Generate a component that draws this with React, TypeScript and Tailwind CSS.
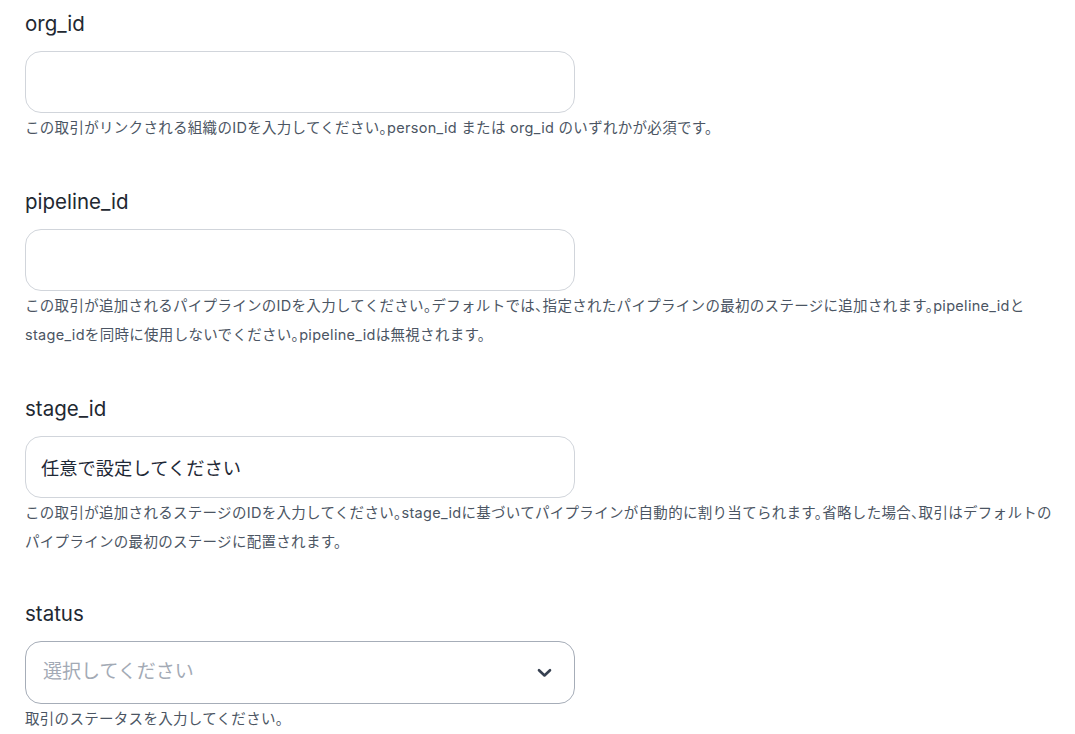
const fields = [
  {
    name: "org_id",
    value: "",
    help: ["この取引がリンクされる組織のIDを入力してください。person_id または org_id のいずれかが必須です。"],
  },
  {
    name: "pipeline_id",
    value: "",
    help: [
      "この取引が追加されるパイプラインのIDを入力してください。デフォルトでは、指定されたパイプラインの最初のステージに追加されます。pipeline_idと",
      "stage_idを同時に使用しないでください。pipeline_idは無視されます。",
    ],
  },
  {
    name: "stage_id",
    value: "任意で設定してください",
    help: [
      "この取引が追加されるステージのIDを入力してください。stage_idに基づいてパイプラインが自動的に割り当てられます。省略した場合、取引はデフォルトの",
      "パイプラインの最初のステージに配置されます。",
    ],
  },
];

const HelpText = ({ lines }: { lines: string[] }) => (
  <p className="text-[14.5px] leading-[29px] tracking-[0.3px] text-[#4b5563] whitespace-nowrap [font-feature-settings:'halt']">
    {lines.map((l, i) => (
      <span key={i} className="block">
        {l}
      </span>
    ))}
  </p>
);

export default function App() {
  return (
    <div
      className="min-h-screen bg-white pl-[25px] pr-[10px] pt-[10px] flex flex-col gap-[46px]"
      style={{ fontFamily: 'Inter, "Noto Sans CJK JP", sans-serif' }}
    >
      {fields.map((f) => (
        <div key={f.name} className="flex flex-col">
          <label className="text-[20.5px] leading-[28px] text-[#222831] mb-[13px]">{f.name}</label>
          <input
            readOnly
            value={f.value}
            className="w-[550px] h-[62px] rounded-2xl border border-[#d1d5db] px-[15px] text-[18.3px] text-[#1f2937] outline-none"
          />
          <HelpText lines={f.help} />
        </div>
      ))}

      <div className="flex flex-col -mt-[2px]">
        <label className="text-[20.5px] leading-[28px] text-[#222831] mb-[13px]">status</label>
        <button className="w-[550px] h-[63px] rounded-2xl border border-[#a6adb8] pl-[17px] pr-[22px] flex items-center justify-between text-left">
          <span className="text-[19px] text-[#a3aab5]">選択してください</span>
          <svg width="15" height="10" viewBox="0 0 15 10" fill="none">
            <path d="M2 2.2l5.5 5.3L13 2.2" stroke="#374151" strokeWidth="2.6" strokeLinecap="round" strokeLinejoin="round" />
          </svg>
        </button>
        <HelpText lines={["取引のステータスを入力してください。"]} />
      </div>
    </div>
  );
}
